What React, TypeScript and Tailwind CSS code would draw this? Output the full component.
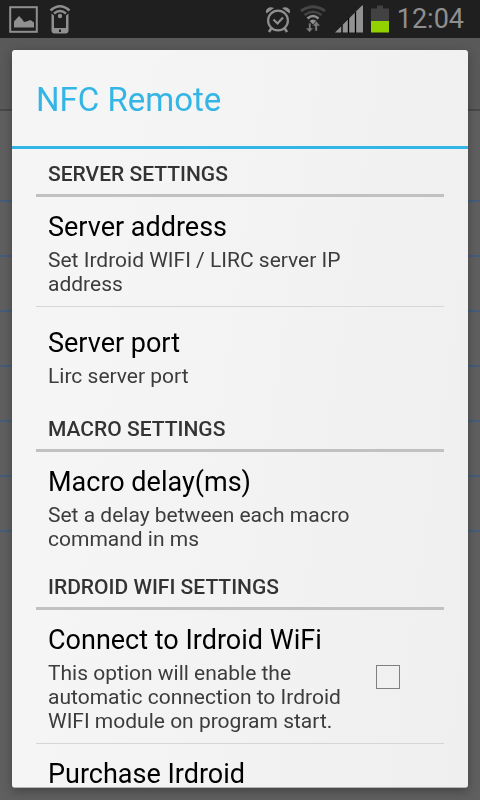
import React, { useState } from 'react'

const SectionHeader: React.FC<{ title: string }> = ({ title }) => (
  <h2 className="flex h-12 items-center border-b-[3px] border-[#c1c1c1] px-3 pt-1 text-[21px] leading-6 font-medium text-[#333333]">
    {title}
  </h2>
)

interface PreferenceTextProps {
  title: string
  summary?: string
}

const PreferenceText: React.FC<PreferenceTextProps> = ({ title, summary }) => (
  <span className="flex flex-1 flex-col gap-[5px] pt-1">
    <span className="text-[27px] leading-8 text-black">{title}</span>
    {summary && <span className="text-[21px] leading-6 text-[#3c3c3c]">{summary}</span>}
  </span>
)

interface PreferenceProps extends PreferenceTextProps {
  divider?: boolean
}

const Preference: React.FC<PreferenceProps> = ({ title, summary, divider = false }) => (
  <div className={divider ? 'border-b border-[#d6d6d6]' : 'border-b border-transparent'}>
    <button
      type="button"
      className={`flex w-full items-center py-2.5 pr-20 pl-3 text-left ${summary ? 'min-h-24' : ''}`}
    >
      <PreferenceText title={title} summary={summary} />
    </button>
  </div>
)

const StatusBar: React.FC = () => (
  <div className="flex h-[38px] items-center justify-between bg-[#1f1f1f] pr-4 pl-2 text-[#8f8f8f]">
    <div className="flex items-center gap-2.5">
      {/* Picture */}
      <svg width="31" height="28" viewBox="0 0 31 28" fill="none">
        <rect x="2.200" y="2.200" width="26.600" height="24.600" stroke="currentColor" strokeWidth="2" />
        <path
          d="M6 22.500v-6l5-5.500 3 3 2 3 2.500-.500 4-1.500 3.500 2.500V22.500z"
          fill="currentColor"
        />
      </svg>
      {/* Phone with signal */}
      <svg width="22" height="32" viewBox="0 0 22 32" fill="none">
        <path d="M1.500 7.500Q11-1 20.500 7.500" stroke="currentColor" strokeWidth="2.500" />
        <path d="M5 10.500Q11 5.500 17 10.500" stroke="currentColor" strokeWidth="2.500" />
        <circle cx="11" cy="13" r="2.200" fill="currentColor" />
        <path
          fillRule="evenodd"
          d="M2.500 10.500l2.500 2V25h12V12.500l2.500-2v17q0 3-3 3h-11q-3 0-3-3zM10 26.500v2.500h2v-2.500z"
          fill="currentColor"
        />
      </svg>
    </div>

    <div className="flex items-center gap-2">
      {/* Alarm */}
      <svg width="26" height="28" viewBox="0 0 26 28" fill="none" stroke="currentColor">
        <circle cx="13" cy="15.500" r="9.900" strokeWidth="2.200" />
        <path d="M8.500 14.500l4 4 5.500-6" strokeWidth="2.200" />
        <path d="M6.500 23L4 27M19.500 23l2.500 4" strokeWidth="2.500" />
        <path
          d="M1.500 8.500Q0 5.500 2.500 3.500T9 3zM24.500 8.500Q26 5.500 23.500 3.500T17 3z"
          fill="currentColor"
          stroke="none"
        />
      </svg>
      {/* Wifi */}
      <svg width="28" height="28" viewBox="0 0 28 28" fill="none">
        <path d="M2 6Q14-2.500 26 6" stroke="#454545" strokeWidth="2.800" />
        <path d="M5.500 10Q14 3.500 22.500 10" stroke="#454545" strokeWidth="2.600" />
        <path d="M8.500 13.500Q14 8.500 19.500 13.500" stroke="currentColor" strokeWidth="2.600" />
        <path d="M10.500 16Q14 13 17.500 16L14 19.500z" fill="currentColor" />
        <path
          d="M9.500 18h2.500v5h2.500l-4 4.500-4-4.500h3zM15.800 26v-5h-2.500l4-5 4.200 5h-3v5z"
          fill="#7a7a7a"
          stroke="#1f1f1f"
          strokeWidth="0.600"
        />
      </svg>
      {/* Mobile signal */}
      <svg width="28" height="28" viewBox="0 0 28 28">
        <path d="M0 27.500L27 0.500h1v27z" fill="#929292" />
        <path d="M7 20v8M13.500 13v15M20.500 7v21" stroke="#000000" strokeWidth="1.300" />
      </svg>
      {/* Battery */}
      <svg width="18" height="28" viewBox="0 0 18 28">
        <path d="M0 3.500h6V0.500h6v3h6V16H0z" fill="#424242" />
        <path d="M0 16h18v11.500H0z" fill="#93d000" />
      </svg>
      <span className="text-[27px] leading-8">12:04</span>
    </div>
  </div>
)

// Screen behind the dialog, already dimmed
const Backdrop: React.FC = () => (
  <div className="flex-1 bg-[#5f5f5f]">
    <div className="h-[73px] border-b-2 border-[#484848] bg-[#595959]" />
    <div className="h-[91px] border-b-2 border-[#455c78]" />
    {Array.from({ length: 6 }, (_, i) => (
      <div key={i} className="h-[55px] border-b-2 border-[#455c78]" />
    ))}
  </div>
)

const App: React.FC = () => {
  const [autoConnect, setAutoConnect] = useState(false)

  return (
    <div className="flex min-h-screen flex-col bg-[#5f5f5f] font-['Roboto','Noto_Sans',sans-serif]">
      <StatusBar />
      <Backdrop />

      <div className="fixed inset-0 flex px-3 pt-[50px] pb-3">
        <div
          role="dialog"
          aria-labelledby="dialog-title"
          className="flex flex-1 flex-col overflow-hidden rounded-[3px] border-b border-[#b5b5b5] bg-linear-[98deg,#f5f5f5_20%,#efefef] shadow-[0_3px_10px_rgba(0,0,0,0.3)]"
        >
          <div className="flex h-[99px] shrink-0 items-center border-b-[3px] border-[#33b5e5] px-6 pt-1">
            <h1 id="dialog-title" className="text-[33px] leading-10 text-[#33b5e5]">
              NFC Remote
            </h1>
          </div>

          <div className="flex-1 overflow-y-auto px-6 [scrollbar-width:none]">
            <SectionHeader title="SERVER SETTINGS" />
            <Preference
              title="Server address"
              summary="Set Irdroid WIFI / LIRC server IP address"
              divider
            />
            <Preference title="Server port" summary="Lirc server port" />

            <SectionHeader title="MACRO SETTINGS" />
            <Preference
              title="Macro delay(ms)"
              summary="Set a delay between each macro command in ms"
            />

            <SectionHeader title="IRDROID WIFI SETTINGS" />
            <label className="flex min-h-24 items-center border-b border-[#d6d6d6] py-2.5 pr-11 pl-3">
              <PreferenceText
                title="Connect to Irdroid WiFi"
                summary="This option will enable the automatic connection to Irdroid WIFI module on program start."
              />
              <input
                type="checkbox"
                checked={autoConnect}
                onChange={e => setAutoConnect(e.target.checked)}
                className="ml-3 h-6 w-6 shrink-0 appearance-none border border-[#808080] checked:bg-[#33b5e5]"
              />
            </label>
            <Preference title="Purchase Irdroid" />
          </div>
        </div>
      </div>
    </div>
  )
}

export default App
